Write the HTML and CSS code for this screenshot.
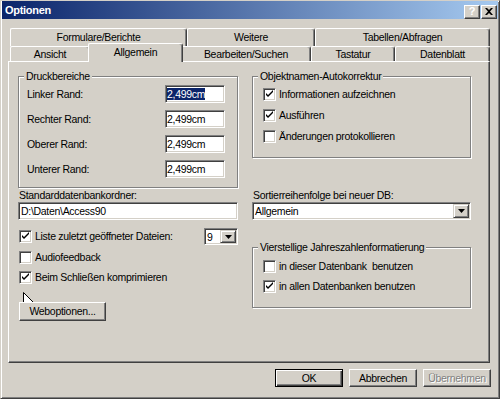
FILE: index.html
```html
<!DOCTYPE html>
<html lang="de">
<head>
    <meta charset="UTF-8">
    <title>Optionen</title>
    <link rel="stylesheet" href="styles.css">
</head>
<body>
    <div class="window">
        <div class="titlebar">
            <span class="title">Optionen</span>
            <div class="title-buttons">
                <button class="tb-btn help">?</button>
                <button class="tb-btn close">
                    <svg width="8" height="7" viewBox="0 0 8 7"><path d="M0 0 L2 0 L4 2 L6 0 L8 0 L5 3.5 L8 7 L6 7 L4 5 L2 7 L0 7 L3 3.5 Z" fill="#000"/></svg>
                </button>
            </div>
        </div>

        <div class="client">
            <div class="tabs">
                <div class="tab-row back">
                    <div class="tab w177">Formulare/Berichte</div>
                    <div class="tab w128">Weitere</div>
                    <div class="tab w175">Tabellen/Abfragen</div>
                </div>
                <div class="tab-row front">
                    <div class="tab w80">Ansicht</div>
                    <div class="tab active">Allgemein</div>
                    <div class="tab w130">Bearbeiten/Suchen</div>
                    <div class="tab w84">Tastatur</div>
                    <div class="tab w95">Datenblatt</div>
                </div>
            </div>

            <div class="panel">
                <fieldset class="group print">
                    <legend>Druckbereiche</legend>
                    <div class="margin-row"><span>Linker Rand:</span><div class="field small"><span class="selected">2,499cm</span></div></div>
                    <div class="margin-row"><span>Rechter Rand:</span><div class="field small">2,499cm</div></div>
                    <div class="margin-row"><span>Oberer Rand:</span><div class="field small">2,499cm</div></div>
                    <div class="margin-row"><span>Unterer Rand:</span><div class="field small">2,499cm</div></div>
                </fieldset>

                <fieldset class="group names">
                    <legend>Objektnamen-Autokorrektur</legend>
                    <div class="check-row"><span class="check on"></span>Informationen aufzeichnen</div>
                    <div class="check-row"><span class="check on"></span>Ausführen</div>
                    <div class="check-row"><span class="check"></span>Änderungen protokollieren</div>
                </fieldset>

                <div class="labeled">
                    <div class="caption">Standarddatenbankordner:</div>
                    <div class="field">D:\Daten\Access90</div>
                </div>

                <div class="labeled">
                    <div class="caption">Sortierreihenfolge bei neuer DB:</div>
                    <div class="field combo">
                        <span>Allgemein</span>
                        <span class="drop-btn"><svg width="7" height="4" viewBox="0 0 7 4"><path d="M0 0 H7 L3.5 4 Z" fill="#000"/></svg></span>
                    </div>
                </div>

                <div class="options">
                    <div class="check-row recent">
                        <span class="check on"></span>
                        <span class="grow">Liste zuletzt geöffneter Dateien:</span>
                        <div class="field combo tiny">
                            <span>9</span>
                            <span class="drop-btn"><svg width="7" height="4" viewBox="0 0 7 4"><path d="M0 0 H7 L3.5 4 Z" fill="#000"/></svg></span>
                        </div>
                    </div>
                    <div class="check-row audio"><span class="check"></span>Audiofeedback</div>
                    <div class="check-row compact"><span class="check on"></span>Beim Schließen komprimieren</div>
                    <button class="btn web">Weboptionen...</button>
                </div>

                <fieldset class="group years">
                    <legend>Vierstellige Jahreszahlenformatierung</legend>
                    <div class="check-row"><span class="check"></span>in dieser Datenbank&nbsp; benutzen</div>
                    <div class="check-row"><span class="check on"></span>in allen Datenbanken benutzen</div>
                </fieldset>
            </div>

            <div class="dialog-buttons">
                <button class="btn default">OK</button>
                <button class="btn">Abbrechen</button>
                <button class="btn disabled">Übernehmen</button>
            </div>
        </div>

        <svg class="cursor" width="13" height="22" viewBox="0 0 13 22">
            <path d="M0.5 0.5 L0.5 17.5 L4.5 13.5 L7.5 20.5 L10 19.5 L7.2 12.5 L12.5 12.5 Z" fill="#fff" stroke="#000" stroke-width="1"/>
        </svg>
    </div>
</body>
</html>
```

FILE: styles.css
```css
* {
    margin: 0;
    padding: 0;
    box-sizing: border-box;
}

body {
    font-family: 'Liberation Sans', Arial, sans-serif;
    font-size: 10.5px;
    letter-spacing: -0.3px;
    line-height: 13px;
    color: #000;
    background: #d4d0c8;
}

button {
    font: inherit;
    letter-spacing: inherit;
    color: inherit;
}

.window {
    position: relative;
    width: 500px;
    height: 399px;
    background: #d4d0c8;
    border: 1px solid;
    border-color: #d4d0c8 #404040 #404040 #d4d0c8;
    box-shadow: inset 1px 1px #fff, inset -1px -1px #808080;
}

/* title bar */
.titlebar {
    display: flex;
    align-items: center;
    justify-content: space-between;
    height: 18px;
    margin: 0 1px;
    padding: 0 1px 0 3px;
    background: linear-gradient(90deg, #0a246a, #a6caf0);
    color: #fff;
    font-size: 11px;
    font-weight: bold;
}

.title-buttons {
    display: flex;
    gap: 1px;
    margin-top: 3px;
}

.tb-btn {
    width: 16px;
    height: 14px;
    display: flex;
    align-items: center;
    justify-content: center;
    background: #d4d0c8;
    border: 1px solid;
    border-color: #fff #404040 #404040 #fff;
    box-shadow: inset -1px -1px #808080;
    font-weight: bold;
    font-size: 11px;
    line-height: 11px;
}

/* client area */
.client {
    padding: 0 9px 0 7px;
}

.tabs {
    display: flex;
    flex-direction: column;
    margin-top: 9px;
    padding-left: 2px;
}

.tab-row {
    display: flex;
}

.tab-row.back {
    height: 18px;
}

.tab-row.front {
    height: 15px;
}

.tab {
    display: flex;
    align-items: center;
    justify-content: center;
    flex: none;
    background: #d4d0c8;
    border-top: 1px solid #fff;
    border-left: 1px solid #fff;
    border-right: 1px solid #404040;
    border-radius: 2px 3px 0 0;
    box-shadow: inset -1px 0 #808080;
}

.w177 { width: 177px; }
.w128 { width: 128px; }
.w175 { width: 175px; }
.w80 { width: 80px; }
.w130 { width: 130px; }
.w84 { width: 84px; }
.w95 { width: 95px; }

.tab.active {
    position: relative;
    z-index: 2;
    width: 95px;
    height: 19px;
    margin: -3px -2px 0;
    padding-bottom: 2px;
}

.panel {
    position: relative;
    z-index: 1;
    display: grid;
    grid-template-columns: 220px 219px;
    column-gap: 14px;
    align-items: start;
    align-content: start;
    height: 302px;
    padding: 8px 0 0 9px;
    border: 1px solid;
    border-color: #fff #404040 #404040 #fff;
    box-shadow: inset -1px -1px #808080;
}

/* group boxes */
.group {
    border: 1px solid #808080;
    box-shadow: inset 1px 1px #fff, 1px 1px #fff;
    min-width: 0;
}

.group legend {
    background: #d4d0c8;
    padding: 0 2px;
}

.print {
    width: 220px;
    padding: 2px 12px 9px 8px;
    display: flex;
    flex-direction: column;
    gap: 7px;
}

.print legend {
    margin-left: -3px;
}

.names,
.years {
    width: 219px;
    padding: 5px 8px 14px 10px;
    display: flex;
    flex-direction: column;
    gap: 8px;
}

.names legend,
.years legend {
    margin-left: -5px;
}

.years {
    margin-top: 21px;
    gap: 7px;
    padding-top: 6px;
    padding-bottom: 14px;
}

.margin-row {
    display: flex;
    align-items: center;
    justify-content: space-between;
    height: 18px;
}

/* fields */
.field {
    height: 18px;
    background: #fff;
    border: 1px solid;
    border-color: #808080 #fff #fff #808080;
    box-shadow: inset 1px 1px #404040, inset -1px -1px #d4d0c8;
    padding: 0 2px 0 2px;
    line-height: 16px;
    white-space: nowrap;
}

.field.small {
    width: 60px;
    padding-left: 1px;
}

.selected {
    background: #0a246a;
    color: #fff;
}

.combo {
    display: flex;
    align-items: center;
    justify-content: space-between;
    padding: 1px 1px 1px 2px;
}

.combo.tiny {
    width: 34px;
    height: 17px;
}

.drop-btn {
    width: 16px;
    height: 14px;
    display: flex;
    align-items: center;
    justify-content: center;
    background: #d4d0c8;
    border: 1px solid;
    border-color: #d4d0c8 #404040 #404040 #d4d0c8;
    box-shadow: inset 1px 1px #fff, inset -1px -1px #808080;
}

.combo.tiny .drop-btn {
    height: 13px;
}

.labeled {
    margin-top: 1px;
}

.caption {
    padding-left: 1px;
    height: 13px;
}

/* checkboxes */
.check-row {
    display: flex;
    align-items: center;
    gap: 3px;
    height: 13px;
    white-space: nowrap;
}

.check {
    flex: none;
    width: 13px;
    height: 13px;
    background: #fff;
    border: 1px solid;
    border-color: #808080 #fff #fff #808080;
    box-shadow: inset 1px 1px #404040, inset -1px -1px #d4d0c8;
}

.check.on {
    background: #fff url("data:image/svg+xml;utf8,<svg xmlns='http://www.w3.org/2000/svg' width='11' height='11'><path d='M2 4 L2 6 L4 8 L9 3 L9 1 L4 6 Z' fill='black'/></svg>") no-repeat 0 0;
}

.options {
    display: flex;
    flex-direction: column;
    align-items: flex-start;
    padding-left: 1px;
}

.recent {
    width: 219px;
    height: 17px;
    margin-top: 8px;
}

.grow {
    flex: 1;
}

.audio {
    margin-top: 6px;
}

.compact {
    margin-top: 7px;
}

/* buttons */
.btn {
    display: flex;
    align-items: center;
    justify-content: center;
    background: #d4d0c8;
    border: 1px solid;
    border-color: #fff #404040 #404040 #fff;
    box-shadow: inset -1px -1px #808080;
}

.btn.web {
    width: 87px;
    height: 19px;
    margin-top: 18px;
}

.dialog-buttons {
    display: flex;
    justify-content: flex-end;
    gap: 6px;
    margin: 6px -1px 0 0;
}

.dialog-buttons .btn {
    width: 68px;
    height: 18px;
}

.btn.default {
    border-color: #000;
    box-shadow: inset 1px 1px #fff, inset -1px -1px #404040, inset -2px -2px #808080;
}

.btn.disabled {
    color: #808080;
    text-shadow: 1px 1px #fff;
}

.cursor {
    position: absolute;
    left: 22px;
    top: 291px;
}
```
